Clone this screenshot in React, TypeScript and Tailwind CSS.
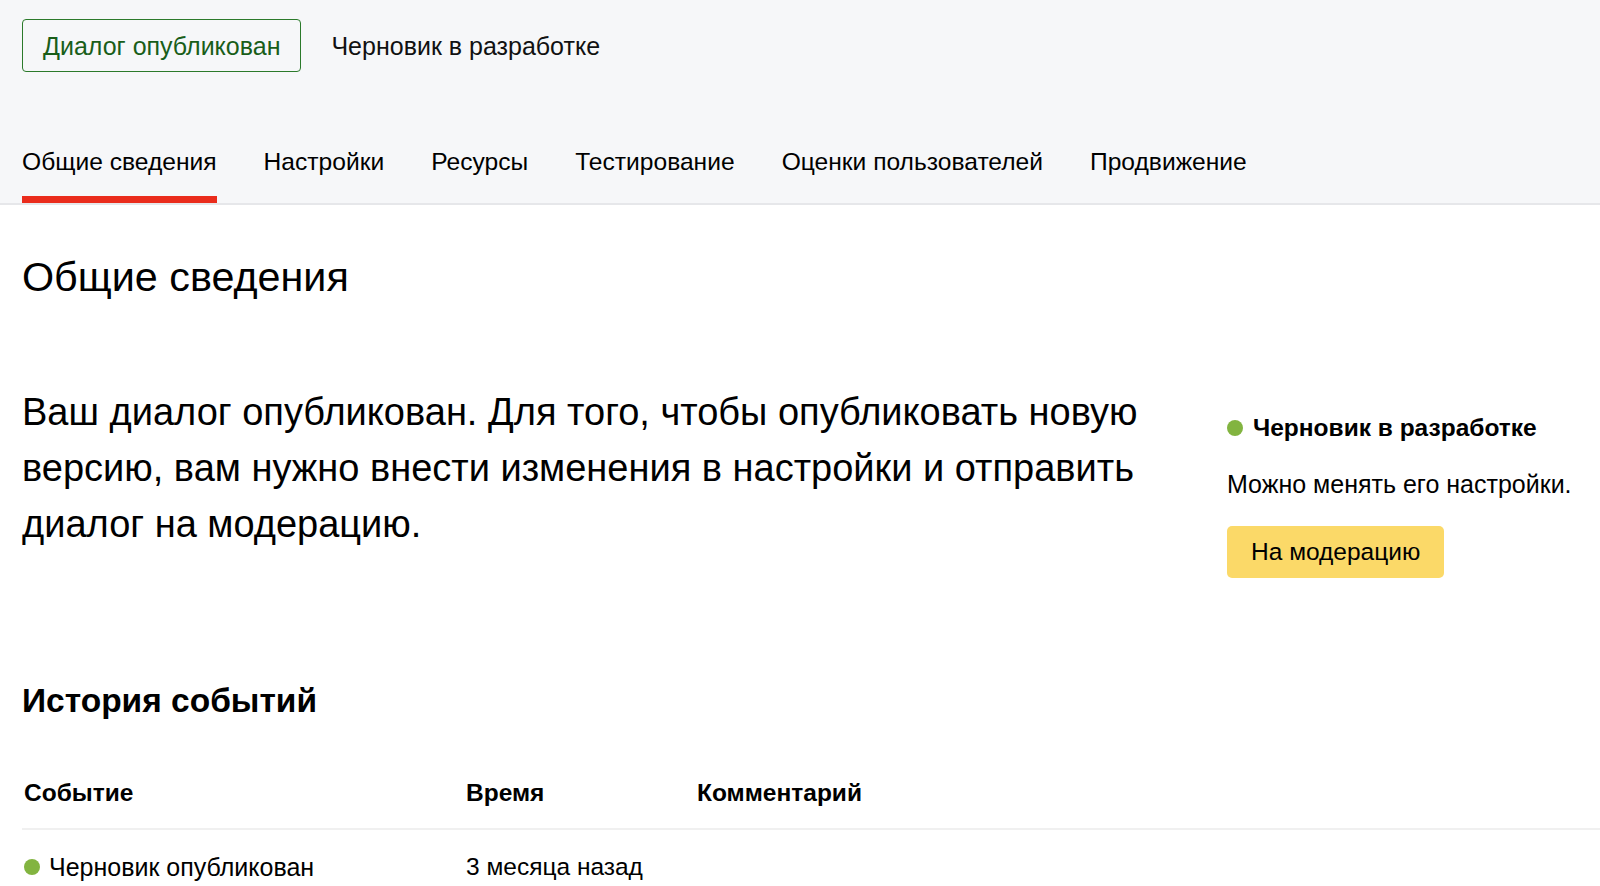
import React from "react";

const font = { fontFamily: '"Liberation Sans", Arial, Helvetica, sans-serif' };

export default function App() {
  const tabs = [
    "Общие сведения",
    "Настройки",
    "Ресурсы",
    "Тестирование",
    "Оценки пользователей",
    "Продвижение",
  ];
  return (
    <div className="min-h-[886px] bg-white text-black overflow-hidden" style={font}>
      <div className="bg-[#f6f7f9] border-b-2 border-[#e6e7ea] px-[22px] pt-[19px]">
        <div className="flex items-center gap-[30px]">
          <button className="h-[53px] px-[20px] border border-[#2b7a2b] rounded-[4px] text-[#195e19] text-[25px] leading-[30px]">
            Диалог опубликован
          </button>
          <span className="text-[25px] leading-[30px] text-[#111]">Черновик в разработке</span>
        </div>
        <div className="flex gap-[47px] mt-[76px]">
          {tabs.map((t, i) => (
            <div
              key={t}
              className={
                "text-[24.6px] leading-[28px] pb-[20px] border-b-[7px] " +
                (i === 0 ? "border-[#ea2c1c]" : "border-transparent")
              }
            >
              {t}
            </div>
          ))}
        </div>
      </div>

      <div className="pl-[22px]">
        <h1 className="text-[41.3px] leading-[48px] mt-[48px] font-normal">Общие сведения</h1>

        <div className="flex mt-[83px]">
          <p className="w-[1170px] text-[38px] leading-[56px]">
            Ваш диалог опубликован. Для того, чтобы опубликовать новую версию, вам нужно внести
            изменения в настройки и отправить диалог на модерацию.
          </p>
          <div className="ml-[35px] pt-[30px]">
            <div className="flex items-center gap-[10px]">
              <span className="w-[16px] h-[16px] rounded-full bg-[#82b440]" />
              <span className="font-bold text-[24.5px] leading-[28px]">Черновик в разработке</span>
            </div>
            <div className="text-[25px] leading-[28px] mt-[28px]">Можно менять его настройки.</div>
            <button className="mt-[28px] h-[52px] px-[24px] rounded-[5px] bg-[#fbd968] text-[24.5px]">
              На модерацию
            </button>
          </div>
        </div>

        <h2 className="font-bold text-[33.5px] leading-[40px] mt-[103px]">История событий</h2>

        <div className="mt-[58px]">
          <div className="flex border-b-2 border-[#f0f0f0] pb-[21px] font-bold text-[24.5px] leading-[28px] pl-[2px]">
            <div className="w-[442px]">Событие</div>
            <div className="w-[231px]">Время</div>
            <div>Комментарий</div>
          </div>
          <div className="flex pt-[23px] text-[25px] leading-[28px] pl-[2px]">
            <div className="w-[442px] flex items-center gap-[9px]">
              <span className="w-[16px] h-[16px] rounded-full bg-[#82b440]" />
              Черновик опубликован
            </div>
            <div className="w-[231px] text-[24.5px]">3 месяца назад</div>
            <div></div>
          </div>
        </div>
      </div>
    </div>
  );
}
